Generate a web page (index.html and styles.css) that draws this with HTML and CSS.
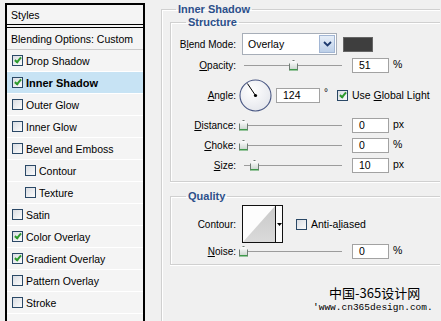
FILE: index.html
```html
<!DOCTYPE html>
<html lang="en">

<head>
    <meta charset="UTF-8">
    <title>Layer Style - Inner Shadow</title>
    <link rel="stylesheet" href="styles.css">
</head>

<body>
    <div class="dialog">
        <ul class="styles-list">
            <li class="head">Styles</li>
            <li class="blend">Blending Options: Custom</li>
            <li><span class="check on"></span>Drop Shadow</li>
            <li class="active"><span class="check on"></span>Inner Shadow</li>
            <li><span class="check"></span>Outer Glow</li>
            <li><span class="check"></span>Inner Glow</li>
            <li><span class="check"></span>Bevel and Emboss</li>
            <li class="sub"><span class="check"></span>Contour</li>
            <li class="sub"><span class="check"></span>Texture</li>
            <li><span class="check"></span>Satin</li>
            <li><span class="check on"></span>Color Overlay</li>
            <li><span class="check on"></span>Gradient Overlay</li>
            <li><span class="check"></span>Pattern Overlay</li>
            <li><span class="check"></span>Stroke</li>
        </ul>

        <fieldset class="group">
            <legend>Inner Shadow</legend>

            <fieldset class="box structure">
                <legend>Structure</legend>

                <div class="row r-blend">
                    <label>B<u>l</u>end Mode:</label>
                    <div class="ctrl">
                        <div class="select">
                            <span>Overlay</span>
                            <div class="btn">
                                <svg width="9" height="6" viewBox="0 0 9 6"><polyline points="1,1 4.5,4.5 8,1" fill="none" stroke="#1d3a6e" stroke-width="1.8"/></svg>
                            </div>
                        </div>
                        <div class="swatch"></div>
                    </div>
                </div>

                <div class="row r-slider">
                    <label><u>O</u>pacity:</label>
                    <div class="ctrl">
                        <div class="slider"><span class="thumb" style="left: 51%"></span></div>
                        <div class="num">51</div>
                        <span class="unit">%</span>
                    </div>
                </div>

                <div class="row r-angle">
                    <label><u>A</u>ngle:</label>
                    <div class="ctrl">
                        <svg class="dial" width="33" height="33" viewBox="0 0 33 33">
                            <defs>
                                <radialGradient id="dialFill" cx="0.4" cy="0.35" r="0.7">
                                    <stop offset="0" stop-color="#ffffff"/>
                                    <stop offset="1" stop-color="#e4e6ec"/>
                                </radialGradient>
                            </defs>
                            <circle cx="16.5" cy="16.5" r="15.5" fill="url(#dialFill)" stroke="#4a5884" stroke-width="1.1"/>
                            <line x1="16.5" y1="16.5" x2="8.4" y2="4.5" stroke="#000" stroke-width="1"/>
                            <circle cx="16.5" cy="16.5" r="1.6" fill="#000"/>
                        </svg>
                        <div class="num wide">124</div>
                        <span class="deg">°</span>
                        <span class="check on"></span>
                        <span class="check-label">Use <u>G</u>lobal Light</span>
                    </div>
                </div>

                <div class="row r-slider">
                    <label><u>D</u>istance:</label>
                    <div class="ctrl">
                        <div class="slider"><span class="thumb" style="left: 1%"></span></div>
                        <div class="num">0</div>
                        <span class="unit">px</span>
                    </div>
                </div>

                <div class="row r-slider">
                    <label><u>C</u>hoke:</label>
                    <div class="ctrl">
                        <div class="slider"><span class="thumb" style="left: 1%"></span></div>
                        <div class="num">0</div>
                        <span class="unit">%</span>
                    </div>
                </div>

                <div class="row r-slider">
                    <label><u>S</u>ize:</label>
                    <div class="ctrl">
                        <div class="slider"><span class="thumb" style="left: 12%"></span></div>
                        <div class="num">10</div>
                        <span class="unit">px</span>
                    </div>
                </div>
            </fieldset>

            <fieldset class="box quality">
                <legend>Quality</legend>

                <div class="row r-contour">
                    <label>Contour:</label>
                    <div class="ctrl">
                        <div class="contour">
                            <svg class="curve" width="32" height="36" viewBox="0 0 32 36">
                                <defs>
                                    <linearGradient id="curveFill" x1="0" y1="0" x2="0" y2="1">
                                        <stop offset="0" stop-color="#c9c9c9"/>
                                        <stop offset="1" stop-color="#dadada"/>
                                    </linearGradient>
                                </defs>
                                <rect width="32" height="36" fill="#fdfdfd"/>
                                <polygon points="0,36 32,0 32,36" fill="url(#curveFill)"/>
                            </svg>
                            <div class="drop">
                                <svg width="5" height="3" viewBox="0 0 5 3"><polygon points="0,0 5,0 2.5,3" fill="#000"/></svg>
                            </div>
                        </div>
                        <span class="check aa"></span>
                        <span class="check-label">Anti-a<u>l</u>iased</span>
                    </div>
                </div>

                <div class="row r-noise">
                    <label><u>N</u>oise:</label>
                    <div class="ctrl">
                        <div class="slider"><span class="thumb" style="left: 1%"></span></div>
                        <div class="num">0</div>
                        <span class="unit">%</span>
                    </div>
                </div>
            </fieldset>
        </fieldset>

        <div class="watermark">
            <div class="wm-cn">中国-365设计网</div>
            <div class="wm-url">'www.cn365design.com.</div>
        </div>
    </div>
</body>

</html>
```

FILE: styles.css
```css
body {
    margin: 0;
    width: 441px;
    height: 321px;
    overflow: hidden;
    background-color: #f0f0f0;
    font-family: "Liberation Sans", Arial, sans-serif;
    font-size: 10px;
    color: #000;
}

.dialog {
    position: relative;
    display: flex;
    align-items: flex-start;
    height: 321px;
    overflow: hidden;
}

/* left styles list */

.styles-list {
    list-style: none;
    flex-shrink: 0;
    width: 136px;
    height: 318px;
    margin: 3px 0 0 5px;
    padding: 0;
    border: 2px solid #000;
    border-bottom: none;
    background-color: #f4f4f4;
    font-size: 10.5px;
}

.styles-list li {
    display: flex;
    align-items: center;
    gap: 3px;
    height: 21px;
    padding-left: 5px;
    border-bottom: 1px solid #fff;
}

.styles-list .head {
    height: 19px;
    padding-left: 4px;
    border-bottom: 4px double #000;
}

.styles-list .blend {
    padding-left: 4px;
    border-bottom-color: #cbcbcb;
}

.styles-list .active {
    background-color: #c7e3f4;
    font-weight: bold;
    font-size: 11px;
}

.styles-list .sub {
    padding-left: 18px;
}

.check {
    position: relative;
    flex-shrink: 0;
    width: 11px;
    height: 11px;
    box-sizing: border-box;
    border: 1px solid #2a4866;
    background: linear-gradient(135deg, #d9dde3, #fbfbfb);
}

.check.on::after {
    content: "";
    position: absolute;
    left: 3px;
    top: 0px;
    width: 2px;
    height: 5px;
    border-right: 2px solid #2c9a2c;
    border-bottom: 2px solid #2c9a2c;
    transform: rotate(40deg);
}

/* right group boxes */

fieldset {
    margin: 0;
    border: 1px solid #d0d0d0;
    border-right: none;
    box-shadow: inset 1px 1px 0 #fff, 0 1px 0 #fff;
    min-width: 0;
}

legend {
    padding: 0 2px;
    font-size: 11px;
    line-height: 13px;
    font-weight: bold;
    color: #2c4f8a;
}

.group {
    flex-shrink: 0;
    width: 279px;
    height: 318px;
    box-sizing: border-box;
    margin: 3px 0 0 16px;
    padding: 0;
    border-bottom: none;
}

.group > legend {
    margin-left: 14px;
}

.box {
    width: 270px;
    box-sizing: border-box;
    margin-left: 8px;
    padding: 4px 0 6px;
}

.box > legend {
    margin-left: 15px;
}

.quality {
    margin-top: 8px;
    padding-top: 2px;
    padding-bottom: 5px;
}

.row {
    display: grid;
    grid-template-columns: 65px 1fr;
    column-gap: 6px;
    align-items: center;
}

.row label {
    text-align: right;
    white-space: nowrap;
}

.ctrl {
    display: flex;
    align-items: center;
}

.r-blend {
    height: 22px;
}

.r-slider {
    height: 20px;
}

.r-angle {
    height: 40px;
}

.r-contour {
    height: 38px;
}

.r-noise {
    height: 16px;
}

/* controls */

.select {
    display: flex;
    width: 95px;
    height: 22px;
    box-sizing: border-box;
    border: 1px solid #a7aeb8;
    background-color: #fff;
}

.select span {
    flex: 1;
    padding-left: 5px;
    line-height: 20px;
    font-size: 10.5px;
}

.select .btn {
    display: flex;
    align-items: center;
    justify-content: center;
    width: 14px;
    margin: 1px;
    border: 1px solid #a2b6d4;
    background: linear-gradient(#e6eef8, #bccfe8);
}

.swatch {
    width: 30px;
    height: 15px;
    box-sizing: border-box;
    margin-left: 6px;
    border: 1px solid #666;
    background-color: #3e3e3e;
}

.slider {
    position: relative;
    width: 100px;
    height: 11px;
}

.slider::before {
    content: "";
    position: absolute;
    left: 2px;
    right: 0;
    top: 5px;
    height: 1px;
    background-color: #9c9c9c;
}

.thumb {
    position: absolute;
    top: 0;
    width: 9px;
    height: 11px;
    margin-left: -4px;
    box-sizing: border-box;
    border: 1px solid #6f7c74;
    border-bottom: 2px solid #3e9a4a;
    clip-path: polygon(50% 0, 100% 40%, 100% 100%, 0 100%, 0 40%);
    background: linear-gradient(#ffffff, #cfd8d2);
}

.num {
    width: 37px;
    height: 15px;
    box-sizing: border-box;
    margin-left: 10px;
    padding-left: 6px;
    border: 1px solid #a2a2a2;
    background-color: #fff;
    line-height: 13px;
    font-size: 10.5px;
}

.num.wide {
    width: 44px;
    margin-left: 4px;
}

.unit {
    margin-left: 4px;
    margin-top: -3px;
    font-size: 10.5px;
}

.deg {
    margin: -6px 9px 0 4px;
}

.dial {
    margin-left: -3px;
}

.check-label {
    margin-left: 4px;
    font-size: 10.5px;
}

.contour {
    display: flex;
    width: 41px;
    height: 38px;
    box-sizing: border-box;
    border: 1px solid #111;
    background-color: #fff;
}

.contour .curve {
    display: block;
}

.contour .drop {
    display: flex;
    align-items: center;
    justify-content: center;
    flex: 1;
    border-left: 1px solid #111;
    background-color: #fbfbfb;
}

.check.aa {
    margin-left: 13px;
}

/* watermark over the dialog */

.watermark {
    position: absolute;
    left: 313px;
    top: 286px;
}

.wm-cn {
    padding-left: 16px;
    font-family: "Noto Sans CJK SC", sans-serif;
    font-size: 13px;
    line-height: 14px;
}

.wm-url {
    margin-top: 2px;
    font-family: "Liberation Mono", monospace;
    font-size: 9.5px;
    line-height: 11px;
}
```
